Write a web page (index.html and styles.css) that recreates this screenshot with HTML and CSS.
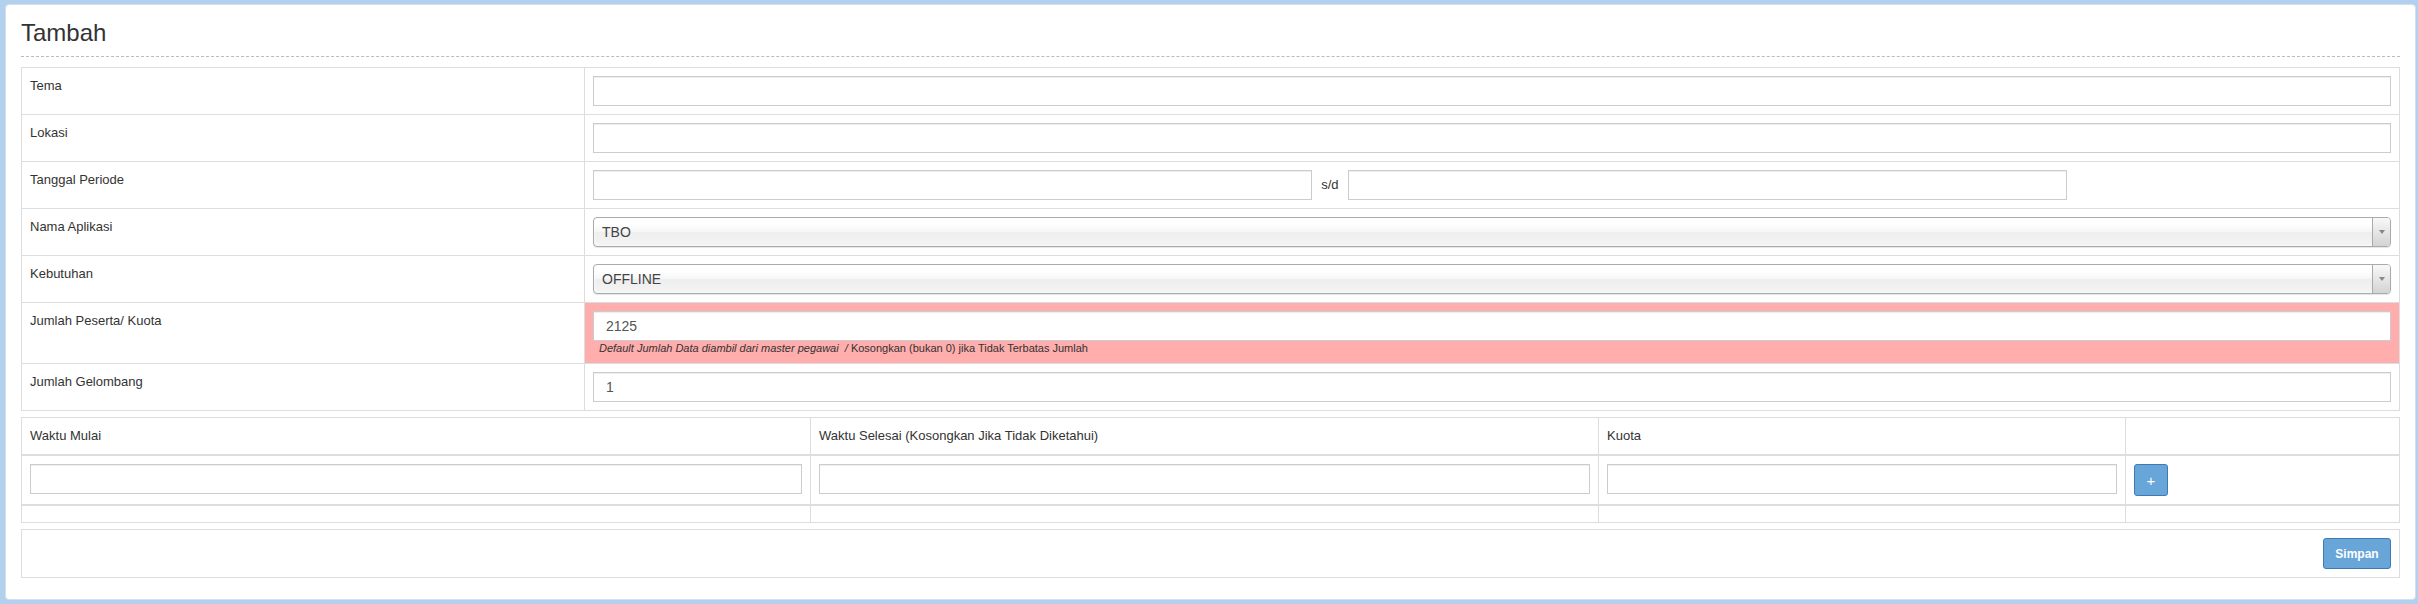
FILE: index.html
```html
<!DOCTYPE html>
<html lang="id">
<head>
<meta charset="utf-8">
<title>Tambah</title>
<link rel="stylesheet" href="styles.css">
</head>
<body>
<div class="panel">
  <h3 class="title">Tambah</h3>
  <table class="form-table">
    <colgroup><col class="c-label"><col></colgroup>
    <tr><td>Tema</td><td><input class="fc" type="text"></td></tr>
    <tr><td>Lokasi</td><td><input class="fc" type="text"></td></tr>
    <tr><td>Tanggal Periode</td><td><div class="range"><input class="fc half" type="text"><span class="sd">s/d</span><input class="fc half" type="text"></div></td></tr>
    <tr><td>Nama Aplikasi</td><td><div class="chosen"><span class="chosen-text">TBO</span><span class="drop"><b class="tri"></b></span></div></td></tr>
    <tr><td>Kebutuhan</td><td><div class="chosen"><span class="chosen-text">OFFLINE</span><span class="drop"><b class="tri"></b></span></div></td></tr>
    <tr><td>Jumlah Peserta/ Kuota</td><td class="warn"><input class="fc" type="text" value="2125"><span class="help"><i>Default Jumlah Data diambil dari master pegawai&nbsp; / </i>Kosongkan (bukan 0) jika Tidak Terbatas Jumlah</span></td></tr>
    <tr><td>Jumlah Gelombang</td><td><input class="fc" type="text" value="1"></td></tr>
  </table>

  <table class="wave-table">
    <colgroup><col class="w1"><col class="w2"><col class="w3"><col></colgroup>
    <thead>
      <tr><th>Waktu Mulai</th><th>Waktu Selesai (Kosongkan Jika Tidak Diketahui)</th><th>Kuota</th><th></th></tr>
    </thead>
    <tbody>
      <tr><td><input class="fc" type="text"></td><td><input class="fc" type="text"></td><td><input class="fc" type="text"></td><td><button class="btn btn-plus" type="button">+</button></td></tr>
    </tbody>
    <tbody class="extra">
      <tr><td></td><td></td><td></td><td></td></tr>
    </tbody>
  </table>

  <div class="footer"><button class="btn btn-save" type="button">Simpan</button></div>
</div>
</body>
</html>
```
FILE: styles.css
```css
html, body { height: 100%; }
body {
  margin: 0;
  padding: 4px 2px 4px 5px;
  box-sizing: border-box;
  background: #b3d0ee;
  font-family: "Liberation Sans", Arial, sans-serif;
  font-size: 13px;
  line-height: 1.42857;
  color: #333;
}
.panel {
  background: #fff;
  border: 1px solid #d3e0ec;
  border-radius: 4px;
  padding: 15px 15px 21px;
}
.title {
  margin: 0 0 10px;
  padding-bottom: 10px;
  font-size: 24px;
  font-weight: normal;
  line-height: 26px;
  color: #333;
  border-bottom: 1px dashed #bbb;
}
table {
  width: 100%;
  border-collapse: collapse;
  border-spacing: 0;
}
td, th {
  border: 1px solid #ddd;
  padding: 8px;
  vertical-align: top;
  text-align: left;
  line-height: 20px;
}
.form-table { margin-bottom: 6px; }
.c-label { width: 563px; }
.fc {
  display: block;
  width: 100%;
  height: 30px;
  box-sizing: border-box;
  margin: 0;
  padding: 4px 12px;
  font-family: "Liberation Sans", Arial, sans-serif;
  font-size: 14px;
  color: #555;
  background: #fff;
  border: 1px solid #ccc;
  border-radius: 0;
  box-shadow: inset 0 1px 1px rgba(0,0,0,.075);
}
.range { display: flex; align-items: center; }
.half { width: 40%; }
.sd { margin: 0 9px; font-size: 13px; color: #333; }
.chosen {
  display: flex;
  height: 30px;
  box-sizing: border-box;
  border: 1px solid #aaa;
  border-radius: 4px;
  background: linear-gradient(#fff 20%, #f6f6f6 50%, #eee 52%, #f4f4f4 100%);
  box-shadow: inset 0 0 3px #fff, 0 1px 1px rgba(0,0,0,.1);
  overflow: hidden;
}
.chosen-text {
  flex: 1;
  padding-left: 8px;
  font-size: 14px;
  line-height: 28px;
  color: #444;
}
.drop {
  width: 17px;
  display: flex;
  align-items: center;
  justify-content: center;
  border-left: 1px solid #aaa;
  background: linear-gradient(#f8f8f8, #d4d4d4);
}
.tri {
  width: 0;
  height: 0;
  border-left: 3px solid transparent;
  border-right: 3px solid transparent;
  border-top: 4px solid #888;
}
.warn { background: #ffadad; }
.help {
  display: block;
  padding-left: 6px;
  font-size: 11px;
  line-height: 14px;
  color: #333;
}
.wave-table { table-layout: fixed; }
.w1 { width: 789px; }
.w2 { width: 788px; }
.w3 { width: 527px; }
.wave-table th {
  font-weight: normal;
  border-bottom: 2px solid #ddd;
}
.wave-table .extra { border-top: 2px solid #ddd; }
.wave-table .extra td { padding: 8px; height: 0; line-height: 0; }
.btn {
  margin: 0;
  color: #fff;
  background: #68a5d8;
  border: 1px solid #3f7ab3;
  border-radius: 3px;
  font-family: "Liberation Sans", Arial, sans-serif;
  cursor: pointer;
}
.btn-plus {
  display: block;
  width: 34px;
  height: 32px;
  padding: 0;
  font-size: 15px;
  font-weight: normal;
}
.footer {
  margin-top: 6px;
  border: 1px solid #ddd;
  padding: 8px;
  display: flex;
  justify-content: flex-end;
}
.btn-save {
  width: 68px;
  height: 31px;
  padding: 0;
  font-size: 12px;
  font-weight: bold;
}
```
